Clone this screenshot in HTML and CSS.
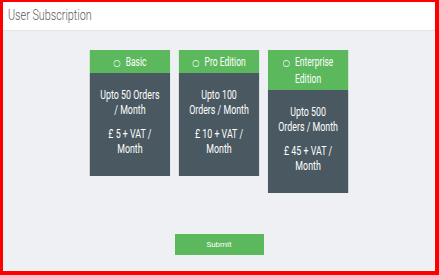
FILE: index.html
```html
<!DOCTYPE html>
<html lang="en">
<head>
    <meta charset="UTF-8">
    <meta name="viewport" content="width=device-width, initial-scale=1.0">
    <title>User Subscription</title>
<link rel="stylesheet" href="styles.css">
</head>
<body>
    <div class="frame">
        <div class="top_bar"><span class="title">User Subscription</span></div>

        <div class="content">
            <div class="plans">
                <div class="plan">
                    <div class="plan_head"><span class="radio"></span>Basic</div>
                    <div class="plan_body">
                        <p>Upto 50 Orders / Month</p>
                        <p>£ 5 + VAT / Month</p>
                    </div>
                </div>
                <div class="plan">
                    <div class="plan_head"><span class="radio"></span>Pro Edition</div>
                    <div class="plan_body">
                        <p>Upto 100 Orders / Month</p>
                        <p>£ 10 + VAT / Month</p>
                    </div>
                </div>
                <div class="plan">
                    <div class="plan_head"><span class="radio"></span>Enterprise Edition</div>
                    <div class="plan_body">
                        <p>Upto 500 Orders / Month</p>
                        <p>£ 45 + VAT / Month</p>
                    </div>
                </div>
            </div>

            <a href="#" class="submit">Submit</a>
        </div>
    </div>
</body>
</html>
```

FILE: styles.css
```css
*{
  box-sizing: border-box;
}
body{
  margin: 0;
  font-family: "Roboto", "Liberation Sans", sans-serif;
}
div.frame{
  height: 275px;
  border: solid red;
  border-width: 2px 4px 4px 3px;
  display: flex;
  flex-direction: column;
  background-color: #eff0f4;
  box-shadow: inset -1px -1px 0 #fbfbfc;
}
div.top_bar{
  height: 29px;
  padding: 4px 0 0 5px;
  background-color: white;
  border-bottom: 1px solid #e4e5e9;
  color: #5a5a5a;
  font-size: 15px;
  font-weight: 300;
  white-space: nowrap;
}
/* the original font is a condensed face, squeeze it */
span.title{
  display: inline-block;
  transform: scaleX(0.72);
  transform-origin: 0 0;
}
div.content{
  flex-grow: 1;
  display: flex;
  flex-direction: column;
  align-items: center;
  padding-top: 19px;
}
div.plans{
  display: flex;
  align-items: flex-start;
  gap: 13px;
  transform: scaleX(0.68);
  transform-origin: 50% 0;
}
div.plan{
  width: 118px;
  color: white;
  text-align: center;
  font-size: 13px;
  line-height: 15px;
}
div.plan_head{
  background-color: #5cb85c;
  padding: 3px 13px;
  font-size: 12.5px;
  line-height: 17px;
}
span.radio{
  display: inline-block;
  width: 10px;
  height: 7px;
  border: 1px solid #d9efd9;
  border-radius: 50%;
  margin-right: 8px;
  vertical-align: -1px;
}
div.plan_body{
  background-color: #4a5961;
  padding: 14px 13px 11px;
}
div.plan_body p{
  margin: 0 0 9px;
}
a.submit{
  margin-top: auto;
  margin-bottom: 16px;
  width: 89px;
  height: 21px;
  line-height: 21px;
  background-color: #5cb85c;
  color: white;
  font-size: 8px;
  text-align: center;
  text-decoration: none;
}
```
